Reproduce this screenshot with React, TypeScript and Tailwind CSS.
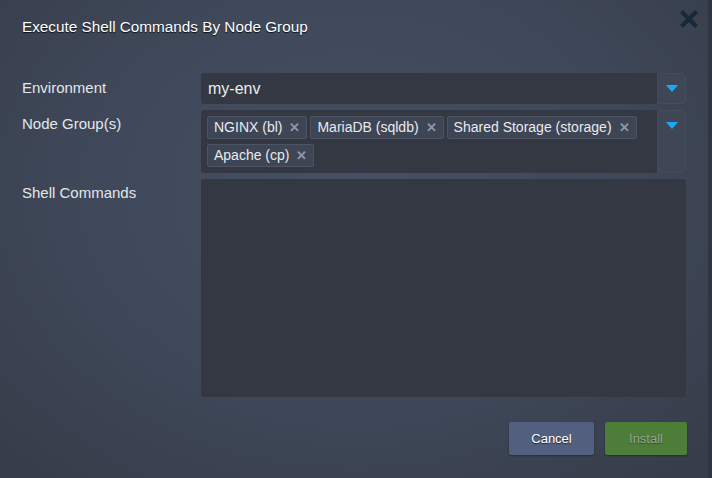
import { X } from 'lucide-react'

const tags = ['NGINX (bl)', 'MariaDB (sqldb)', 'Shared Storage (storage)', 'Apache (cp)']

function Arrow() {
  return (
    <svg width="12" height="7" viewBox="0 0 12 7" aria-hidden="true">
      <path d="M0 0h12L6 7z" fill="#1ba9f5" />
    </svg>
  )
}

export default function App() {
  return (
    <div className="flex w-[712px] h-[478px] overflow-hidden font-['Liberation_Sans',Arial,sans-serif]">
      <div className="relative w-[708px] h-full bg-[radial-gradient(ellipse_70%_80%_at_50%_40%,#455064_0%,#3f4859_55%,#363d4a_100%)]">
        <button className="absolute right-[7px] top-[7px] text-[#17283a]" aria-label="Close">
          <X size={24} strokeWidth={4.2} strokeLinecap="square" />
        </button>

        <h1 className="pl-[22px] pt-[17px] text-[15.3px] leading-[20px] text-white [text-shadow:0_1px_1px_rgba(0,0,0,0.8)]">
          Execute Shell Commands By Node Group
        </h1>

        <div className="mt-[36px] flex flex-col gap-[6px] pl-[22px] pr-[22px]">
          {/* Environment */}
          <div className="flex">
            <label className="w-[179px] pt-[4px] text-[15px] text-[#e4e6ea]">Environment</label>
            <div className="flex flex-1 h-[31px] rounded-[3px] bg-[#343842] overflow-hidden">
              <div className="flex-1 pl-[7px] text-[16px] leading-[31px] text-[#eceef0]">my-env</div>
              <div className="flex w-[29px] items-center justify-center bg-[#3f4757] border border-[#454d5d] rounded-r-[3px]">
                <Arrow />
              </div>
            </div>
          </div>

          {/* Node groups */}
          <div className="flex">
            <label className="w-[179px] pt-[3px] text-[15px] text-[#e4e6ea]">Node Group(s)</label>
            <div className="flex flex-1 h-[63px] rounded-[3px] bg-[#343842] overflow-hidden">
              <div className="flex flex-1 flex-wrap content-start gap-x-[3px] gap-y-[5px] pl-[6px] pt-[6px]">
                {tags.map((t) => (
                  <span
                    key={t}
                    className="flex h-[23px] items-center gap-[7px] rounded-[2px] border border-[#4c5464] bg-[#3e4555] pl-[6px] pr-[6px] text-[14px] text-[#e8eaee]"
                  >
                    {t}
                    <span className="text-[13px] font-bold text-[#8f97a5]">✕</span>
                  </span>
                ))}
              </div>
              <div className="flex w-[29px] justify-center pt-[11px] bg-[#3f4757] border border-[#454d5d] rounded-r-[3px]">
                <Arrow />
              </div>
            </div>
          </div>

          {/* Shell commands */}
          <div className="flex">
            <label className="w-[179px] pt-[3px] text-[15px] text-[#e4e6ea]">Shell Commands</label>
            <textarea className="flex-1 h-[218px] resize-none rounded-[3px] bg-[#343842] outline-none" />
          </div>
        </div>

        <div className="mt-[25px] flex justify-end gap-[11px] pr-[21px]">
          <button className="h-[33px] w-[85px] rounded-[2px] bg-[#525f7f] text-[13px] text-white shadow-[0_1px_2px_rgba(0,0,0,0.35)] [text-shadow:0_1px_1px_rgba(0,0,0,0.6)]">
            Cancel
          </button>
          <button className="h-[33px] w-[82px] rounded-[2px] bg-[#4e7d3a] text-[13px] text-[#93a88c] shadow-[0_1px_2px_rgba(0,0,0,0.35)] [text-shadow:0_1px_1px_rgba(0,0,0,0.4)]">
            Install
          </button>
        </div>
      </div>
      <div className="w-[4px] h-full bg-[#2f3541]" />
    </div>
  )
}
